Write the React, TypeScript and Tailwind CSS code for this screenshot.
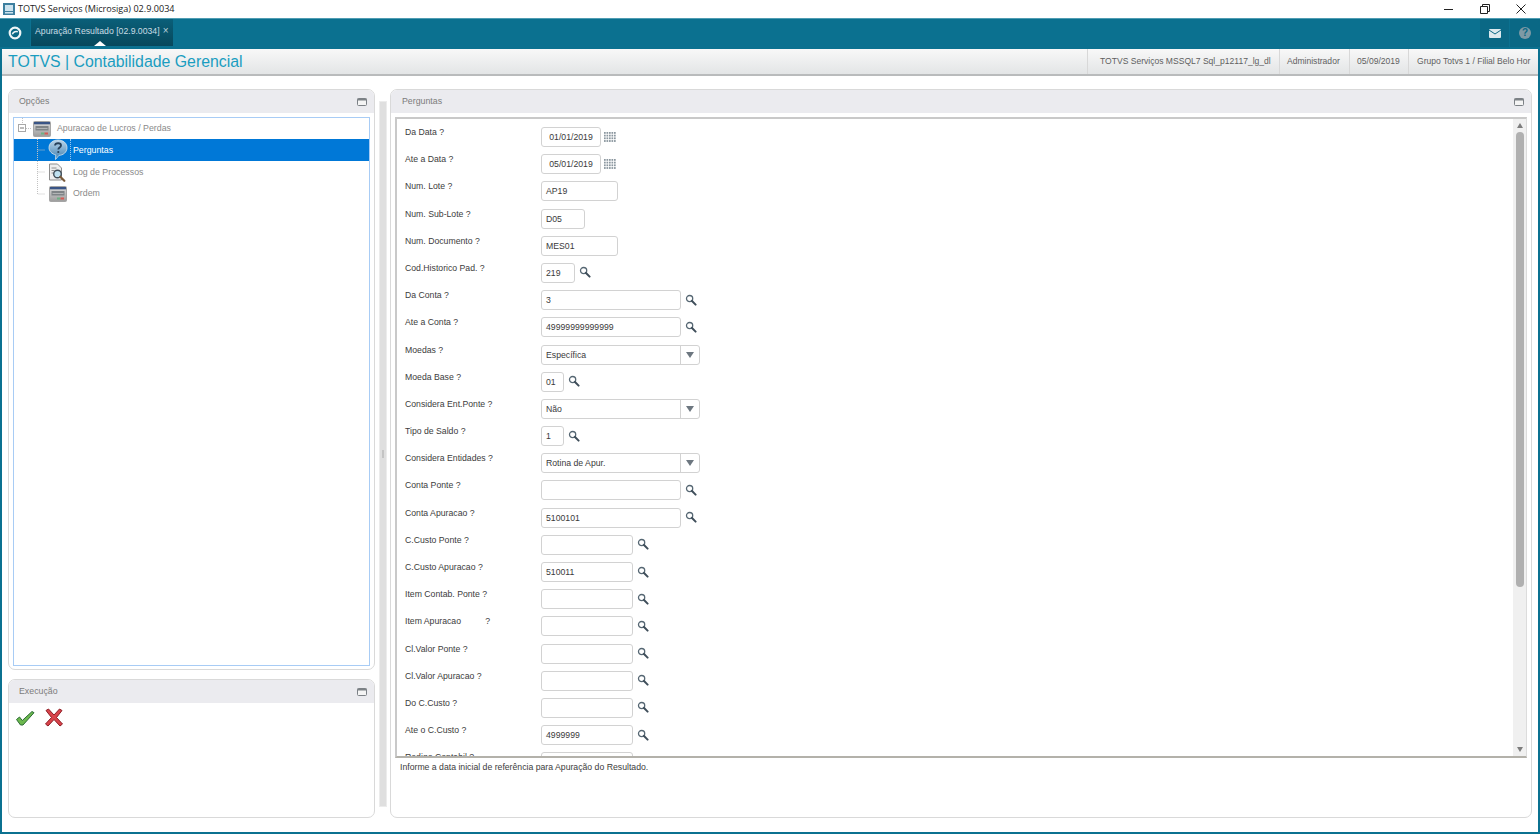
import React from "react";

type Row = { label: string; value?: string; kind: "date" | "text" | "search" | "select"; w: string };

const rows: Row[] = [
  { label: "Da Data ?", value: "01/01/2019", kind: "date", w: "w-[60px]" },
  { label: "Ate a Data ?", value: "05/01/2019", kind: "date", w: "w-[60px]" },
  { label: "Num. Lote ?", value: "AP19", kind: "text", w: "w-[77px]" },
  { label: "Num. Sub-Lote ?", value: "D05", kind: "text", w: "w-[44px]" },
  { label: "Num. Documento ?", value: "MES01", kind: "text", w: "w-[77px]" },
  { label: "Cod.Historico Pad. ?", value: "219", kind: "search", w: "w-[34px]" },
  { label: "Da Conta ?", value: "3", kind: "search", w: "w-[140px]" },
  { label: "Ate a Conta ?", value: "49999999999999", kind: "search", w: "w-[140px]" },
  { label: "Moedas ?", value: "Específica", kind: "select", w: "w-[159px]" },
  { label: "Moeda Base ?", value: "01", kind: "search", w: "w-[23px]" },
  { label: "Considera Ent.Ponte ?", value: "Não", kind: "select", w: "w-[159px]" },
  { label: "Tipo de Saldo ?", value: "1", kind: "search", w: "w-[23px]" },
  { label: "Considera Entidades ?", value: "Rotina de Apur.", kind: "select", w: "w-[159px]" },
  { label: "Conta Ponte ?", kind: "search", w: "w-[140px]" },
  { label: "Conta Apuracao ?", value: "5100101", kind: "search", w: "w-[140px]" },
  { label: "C.Custo Ponte ?", kind: "search", w: "w-[92px]" },
  { label: "C.Custo Apuracao ?", value: "510011", kind: "search", w: "w-[92px]" },
  { label: "Item Contab. Ponte ?", kind: "search", w: "w-[92px]" },
  { label: "Item Apuracao          ?", kind: "search", w: "w-[92px]" },
  { label: "Cl.Valor Ponte ?", kind: "search", w: "w-[92px]" },
  { label: "Cl.Valor Apuracao ?", kind: "search", w: "w-[92px]" },
  { label: "Do C.Custo ?", kind: "search", w: "w-[92px]" },
  { label: "Ate o C.Custo ?", value: "4999999", kind: "search", w: "w-[92px]" },
  { label: "Redigo Contabil ?", kind: "text", w: "w-[92px]" },
];

function Search() {
  return (
    <svg width="12" height="12" viewBox="0 0 12 12" className="ml-[4px] -mt-[1px] shrink-0">
      <circle cx="4.6" cy="4.6" r="3.1" fill="none" stroke="#566773" strokeWidth="1.3" />
      <path d="M7 7l3.6 3.6" stroke="#3f4e5a" strokeWidth="2" strokeLinecap="round" />
    </svg>
  );
}

function Calendar() {
  const cells = [];
  for (let y = 0; y < 4; y++) for (let x = 0; x < 5; x++) cells.push(<rect key={x + "-" + y} x={x * 2.5} y={y * 2.7 + 1} width="1.7" height="1.8" fill="#8a969e" />);
  return (
    <svg width="13" height="13" viewBox="0 0 13 13" className="ml-[3px] shrink-0">
      {cells}
    </svg>
  );
}

function Minimize() {
  return (
    <svg width="10" height="8" viewBox="0 0 10 8" className="shrink-0">
      <rect x="0.5" y="0.5" width="9" height="7" rx="1" fill="#f4f4f4" stroke="#7c8186" />
      <rect x="0.5" y="0.5" width="9" height="2" fill="#7c8186" />
    </svg>
  );
}

function WindowIcon() {
  return (
    <svg width="18" height="16" viewBox="0 0 18 16" className="shrink-0">
      <defs>
        <linearGradient id="winbody" x1="0" y1="0" x2="0" y2="1">
          <stop offset="0" stopColor="#dcdcdc" />
          <stop offset="1" stopColor="#9c9c9c" />
        </linearGradient>
      </defs>
      <rect x="0.5" y="0.5" width="17" height="15" rx="1" fill="url(#winbody)" stroke="#a5a5a5" />
      <rect x="1" y="1" width="16" height="2.3" fill="#3a5586" />
      <rect x="2.5" y="5" width="13" height="4.500" fill="#7f8487" />
      <rect x="3.500" y="7" width="11" height="0.7" fill="#c9c9c9" />
      <rect x="8" y="11.500" width="3.500" height="2" fill="#6cb184" />
      <rect x="11.500" y="11.500" width="3.500" height="2" fill="#d65a55" />
    </svg>
  );
}

function HelpIcon() {
  return (
    <svg width="20" height="22" viewBox="0 0 20 22" className="shrink-0">
      <defs>
        <linearGradient id="helpg" x1="0" y1="0" x2="0" y2="1">
          <stop offset="0" stopColor="#bcd6ea" />
          <stop offset="1" stopColor="#3f7fb0" />
        </linearGradient>
      </defs>
      <path d="M10 1c5 0 9 3 9 7.700 0 4.600-4 7.600-8 7.600l-3.500 4.200.3-4.600C4 15 1 12.300 1 8.700 1 4 5 1 10 1z" fill="url(#helpg)" stroke="#d7e4ee" strokeWidth="0.8" />
      <path d="M7 6.500c.3-3 6-3 6 0 0 2-2.700 2-2.700 4" fill="none" stroke="#27415a" strokeWidth="1.800" />
      <circle cx="10.300" cy="13" r="1.100" fill="#27415a" />
    </svg>
  );
}

function LogIcon() {
  return (
    <svg width="18" height="19" viewBox="0 0 18 19" className="shrink-0">
      <path d="M1.500 1h8l4 4v12h-12z" fill="#eeeeee" stroke="#8d8d8d" />
      <path d="M3.500 5h5M3.500 7.500h3M3.500 10h2" stroke="#777" strokeWidth="0.8" />
      <circle cx="9.500" cy="11" r="3.800" fill="#bfe0ef" stroke="#3f4c57" strokeWidth="1.400" />
      <path d="M12.300 13.800l4 4" stroke="#7a5a3a" strokeWidth="2.200" strokeLinecap="round" />
    </svg>
  );
}

function Dash({ last }: { last?: boolean }) {
  return (
    <svg width="10" height="22" viewBox="0 0 10 22" className="ml-[22px] mr-[2px] shrink-0">
      <path d={last ? "M1.500 0V11H9" : "M1.500 0V22M1.500 11H9"} fill="none" stroke="#c2c2c2" strokeDasharray="1 1" />
    </svg>
  );
}

function Field({ row }: { row: Row }) {
  const center = row.kind === "date";
  return (
    <div className="flex h-[20px] items-center">
      <div className={`${row.w} h-[20px] flex items-center rounded-[3px] border border-[#d2d2d2] bg-white text-[8.700px] text-[#3a3a3a] ${center ? "justify-center" : "pl-[4px]"} ${row.kind === "select" ? "justify-between pr-0" : ""}`}>
        <span className="whitespace-nowrap leading-[10px]">{row.value}</span>
        {row.kind === "select" && (
          <span className="flex h-full w-[19px] items-center justify-center border-l border-[#d2d2d2]">
            <span className="h-0 w-0 border-x-[4px] border-t-[6px] border-x-transparent border-t-[#6d7780]" />
          </span>
        )}
      </div>
      {row.kind === "search" && <Search />}
      {row.kind === "date" && <Calendar />}
    </div>
  );
}

function PanelHeader({ title, inset }: { title: string; inset?: boolean }) {
  return (
    <div className={`flex h-[23px] shrink-0 items-center justify-between rounded-t-[6px] bg-[#ebebef] pr-[7px] text-[8.800px] text-[#7b7b7b] ${inset ? "pl-[11px]" : "pl-[10px]"}`}>
      <span className="pt-[1px]">{title}</span>
      <Minimize />
    </div>
  );
}

export default function App() {
  return (
    <div className="flex h-[834px] w-[1540px] flex-col overflow-hidden bg-white font-['Liberation_Sans',Arial,sans-serif]">
      {/* Window title bar */}
      <div className="flex h-[18px] shrink-0 items-center pl-[3px] pr-[13px]">
        <svg width="12" height="12" viewBox="0 0 12 12" className="shrink-0">
          <rect x="0" y="0" width="12" height="12" fill="#3d7f9f" />
          <rect x="2" y="2" width="8" height="6" fill="#cde3ee" />
          <rect x="2" y="9" width="8" height="1.500" fill="#cde3ee" />
        </svg>
        <span className="ml-[3px] whitespace-nowrap font-['Open_Sans',sans-serif] text-[9.100px] leading-[18px] text-[#222]">TOTVS Serviços (Microsiga) 02.9.0034</span>
        <div className="ml-auto flex items-center">
          <svg width="12" height="12" viewBox="0 0 12 12" className="mr-[24px]"><path d="M1 6.500h9" stroke="#222" /></svg>
          <svg width="12" height="12" viewBox="0 0 12 12" className="mr-[24px]"><path d="M1.500 3.500h7v7h-7zM3.500 3.500v-2h7v7h-2" fill="none" stroke="#222" /></svg>
          <svg width="12" height="12" viewBox="0 0 12 12"><path d="M1.500 1.500l9 9M10.500 1.500l-9 9" stroke="#222" /></svg>
        </div>
      </div>

      {/* Teal tab bar */}
      <div className="flex h-[31px] shrink-0 border-t border-[#4f9db3] bg-[#0b7190]">
        <div className="flex h-[28px] w-[30px] items-center justify-center bg-[#0a6885]">
          <svg width="14" height="14" viewBox="0 0 14 14">
            <circle cx="7" cy="7" r="5.300" fill="none" stroke="#eef5f7" strokeWidth="2.200" />
            <path d="M4.300 8.200C5.500 5.500 8 5 9.800 5.800" fill="none" stroke="#eef5f7" strokeWidth="1.500" />
          </svg>
        </div>
        <div className="relative ml-[1px] flex h-[27px] w-[142px] items-center whitespace-nowrap bg-gradient-to-b from-[#0a5f79] to-[#07485c] pl-[4px] text-[8.700px] text-[#c9dde4]">
          <span className="-mt-[1px]">Apuração Resultado [02.9.0034]</span>
          <span className="-mt-[3px] ml-[3px] text-[10px] leading-[10px] text-[#b8d0d8]">×</span>
          <span className="absolute bottom-0 left-[63px] h-0 w-0 border-x-[6px] border-b-[5px] border-x-transparent border-b-white" />
        </div>
        <div className="ml-auto flex h-[28px]">
          <div className="flex w-[29px] items-center justify-center bg-[#0a6885]">
            <svg width="12" height="9" viewBox="0 0 12 9"><rect width="12" height="9" rx="1" fill="#dce9ee" /><path d="M0 1l6 4 6-4" fill="none" stroke="#0a6885" /></svg>
          </div>
          <div className="ml-[1px] flex w-[30px] items-center justify-center bg-[#0a6885]">
            <span className="flex h-[12px] w-[12px] items-center justify-center rounded-full bg-[#7e9aa5] text-[10px] font-bold leading-none text-[#0a6885]">?</span>
          </div>
        </div>
      </div>

      {/* Frame body */}
      <div className="flex min-h-0 flex-1 flex-col border-x-2 border-b-2 border-[#0b7190]">
        {/* Module header */}
        <div className="flex h-[27px] shrink-0 items-center border-b-2 border-[#b9bbbc] bg-gradient-to-b from-[#f8f8f8] to-[#e3e5e6] pl-[6px]">
          <span className="whitespace-nowrap text-[15.850px] leading-[25px] text-[#1a9dc0]">TOTVS | Contabilidade Gerencial</span>
          <div className="ml-auto flex h-full items-center whitespace-nowrap text-[8.550px] text-[#5f5f5f]">
            <span className="flex h-full w-[192px] items-center border-l border-[#d8d8d8] pl-[12px]">TOTVS Serviços MSSQL7 Sql_p12117_lg_dl</span>
            <span className="flex h-full w-[70px] items-center border-l border-[#d8d8d8] pl-[7px]">Administrador</span>
            <span className="flex h-full w-[59px] items-center border-l border-[#d8d8d8] pl-[7px]">05/09/2019</span>
            <span className="flex h-full w-[130px] items-center border-l border-[#d8d8d8] pl-[8px]">Grupo Totvs 1 / Filial Belo Hor</span>
          </div>
        </div>

        {/* Content */}
        <div className="flex min-h-0 flex-1 pb-[14px] pl-[6px] pr-[6px] pt-[13px]">
          {/* Left column */}
          <div className="flex w-[367px] shrink-0 flex-col gap-[9px]">
            <div className="flex h-[581px] flex-col rounded-[7px] border border-[#d9d9d9]">
              <PanelHeader title="Opções" />
              <div className="mx-[4px] mb-[3px] mt-[4px] flex-1 border border-[#a8ccf5]">
                <div className="flex h-[21px] items-center text-[8.800px] text-[#8a8a8a]">
                  <svg width="17" height="21" viewBox="0 0 17 21" className="ml-[2px] shrink-0">
                    <path d="M6.500 0V6M10 10.500h6" stroke="#c2c2c2" strokeDasharray="1 1" />
                    <rect x="2.500" y="6.500" width="7" height="7" fill="#fff" stroke="#a8a8a8" />
                    <path d="M4 10h4" stroke="#777" />
                  </svg>
                  <WindowIcon />
                  <span className="ml-[6px]">Apuracao de Lucros / Perdas</span>
                </div>
                <div className="flex h-[22px] items-center bg-[#0078d7] text-[8.800px] text-white">
                  <Dash />
                  <HelpIcon />
                  <span className="ml-[2px] flex h-full items-center border-l border-dotted border-[#9cc8ee] pl-[2px] pt-[1px]">Perguntas</span>
                </div>
                <div className="flex h-[22px] items-center text-[8.800px] text-[#8a8a8a]">
                  <Dash />
                  <LogIcon />
                  <span className="ml-[7px] pt-[1px]">Log de Processos</span>
                </div>
                <div className="flex h-[21px] items-center text-[8.800px] text-[#8a8a8a]">
                  <Dash last />
                  <span className="ml-[1px]"><WindowIcon /></span>
                  <span className="ml-[6px]">Ordem</span>
                </div>
              </div>
            </div>
            <div className="flex flex-1 flex-col rounded-[7px] border border-[#d9d9d9]">
              <PanelHeader title="Execução" />
              <div className="flex items-center gap-[9px] pl-[6px] pt-[5px]">
                <svg width="20" height="16" viewBox="0 0 20 16">
                  <path d="M1.500 9.500l3-2.500 2.800 3.500L17 1.500l2 1.200L8 15H5.500z" fill="#6cb84e" stroke="#2c6b35" strokeWidth="1" strokeLinejoin="round" />
                </svg>
                <svg width="20" height="19" viewBox="0 0 20 19">
                  <path d="M2 2.500L4.500 1 10 7l5.500-6L18 2.500 12.500 9.500 18.500 16 16 18l-6-6.500L4 18l-2.500-2L7.500 9.500z" fill="#d9434a" stroke="#8e1d25" strokeWidth="1" strokeLinejoin="round" />
                </svg>
              </div>
            </div>
          </div>

          {/* Splitter */}
          <div className="mb-[11px] ml-[4px] mr-[3px] mt-[12px] flex w-[8px] shrink-0 items-center justify-center border border-[#ececec] bg-[#dfdfdf]">
            <span className="h-[8px] w-[2px] bg-[#c4c4c4]" />
          </div>

          {/* Right panel */}
          <div className="flex min-w-0 flex-1 flex-col rounded-[7px] border border-[#d9d9d9]">
            <PanelHeader title="Perguntas" inset />
            <div className="mx-[4px] mt-[4px] flex h-[641px] shrink-0 border-b-2 border-l-2 border-r border-t-2 border-b-[#b3b1aa] border-l-[#c9c9c9] border-r-[#dcdcdc] border-t-[#c9c9c9]">
              <div className="flex min-w-0 flex-1 flex-col gap-[7.200px] overflow-hidden pl-[8px] pt-[8px]">
                {rows.map((r) => (
                  <div key={r.label} className="flex h-[20px] shrink-0">
                    <div className="w-[136px] shrink-0 whitespace-pre text-[8.700px] leading-[10px] text-[#3c3c3c]">{r.label}</div>
                    <Field row={r} />
                  </div>
                ))}
              </div>
              <div className="flex w-[13px] shrink-0 flex-col items-center bg-[#f0f0f0] pt-[4px]">
                <span className="h-0 w-0 border-x-[3px] border-b-[5px] border-x-transparent border-b-[#7d7d7d]" />
                <span className="mt-[4px] h-[455px] w-[8px] rounded-[4px] bg-[#b0b0b0]" />
                <span className="mb-[4px] mt-auto h-0 w-0 border-x-[3px] border-t-[5px] border-x-transparent border-t-[#7d7d7d]" />
              </div>
            </div>
            <div className="pl-[9px] pt-[3px] text-[8.700px] leading-[12px] text-[#3c3c3c]">Informe a data inicial de referência para Apuração do Resultado.</div>
          </div>
        </div>
      </div>
    </div>
  );
}
